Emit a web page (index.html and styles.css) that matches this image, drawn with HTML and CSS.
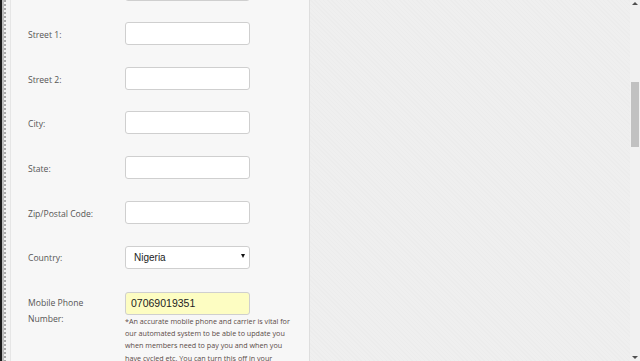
FILE: index.html
```html
<!DOCTYPE html>
<html>
<head>
    <link rel="stylesheet" href="styles.css">
</head>
<body>
    <div class="page">
        <div class="edge"></div>
        <div class="dots"></div>

        <div class="panel">
            <form class="form">
                <div class="row">
                    <label class="input-label">Address:</label>
                    <input class="input-field" type="text">
                </div>
                <div class="row">
                    <label class="input-label">Street 1:</label>
                    <input class="input-field" type="text">
                </div>
                <div class="row">
                    <label class="input-label">Street 2:</label>
                    <input class="input-field" type="text">
                </div>
                <div class="row">
                    <label class="input-label">City:</label>
                    <input class="input-field" type="text">
                </div>
                <div class="row">
                    <label class="input-label">State:</label>
                    <input class="input-field" type="text">
                </div>
                <div class="row">
                    <label class="input-label">Zip/Postal Code:</label>
                    <input class="input-field" type="text">
                </div>
                <div class="row">
                    <label class="input-label">Country:</label>
                    <div class="select-wrap">
                        <select class="input-field select-field">
                            <option>Nigeria</option>
                        </select>
                    </div>
                </div>
                <div class="row row-top">
                    <label class="input-label label-wrap">Mobile Phone Number:</label>
                    <div class="field-col">
                        <input class="input-field phone-field" type="text" value="07069019351">
                        <p class="help">*An accurate mobile phone and carrier is vital for our automated system to be able to update you when members need to pay you and when you have cycled etc. You can turn this off in your settings.</p>
                    </div>
                </div>
            </form>
        </div>

        <div class="backdrop"></div>

        <div class="scrollbar">
            <div class="arrow arrow-up"></div>
            <div class="thumb"></div>
            <div class="arrow arrow-down"></div>
        </div>
    </div>
</body>
</html>
```

FILE: styles.css
```css
body {
    margin: 0;
    font-family: "Open Sans", Arial, sans-serif;
    overflow: hidden;
}

.page {
    display: flex;
    width: 640px;
    height: 361px;
    overflow: hidden;
    background-color: #f4f4f4;
}

.edge {
    width: 2px;
    background-color: #1b1b1b;
    border-right: 2px solid #bdbdbd;
}

.dots {
    width: 6px;
    background-color: #f2f2f2;
    background-image: repeating-linear-gradient(to bottom, #a8a8a8 0 2px, transparent 2px 4px);
    background-size: 2px 4px;
    background-repeat: repeat-y;
}

.panel {
    width: 281px;
    padding-left: 17px;
    background-color: #f7f7f7;
    border-left: 1px solid #e6e6e6;
    border-right: 1px solid #dedede;
}

.form {
    margin-top: -22.5px;
}

.row {
    display: flex;
    align-items: center;
    height: 23px;
    margin-bottom: 21.67px;
}

.row-top {
    align-items: flex-start;
    height: auto;
}

.input-label {
    width: 97px;
    flex-shrink: 0;
    padding-top: 3px;
    font-size: 8.6px;
    color: #555;
}

.label-wrap {
    width: 80px;
    margin-right: 17px;
    padding-top: 5px;
    line-height: 16px;
}

.input-field {
    box-sizing: border-box;
    width: 125px;
    height: 23px;
    margin: 0;
    padding: 0 6px;
    background-color: #fff;
    border: 1px solid #cfcfcf;
    border-radius: 3px;
    font-family: Arial, "Liberation Sans", sans-serif;
    font-size: 10px;
    color: #222;
}

.select-wrap {
    position: relative;
}

.select-field {
    appearance: none;
    -webkit-appearance: none;
    padding-left: 8px;
}

.select-wrap::after {
    content: "";
    position: absolute;
    right: 5px;
    top: 10px;
    border-left: 2.5px solid transparent;
    border-right: 2.5px solid transparent;
    border-top: 4px solid #111;
}

.phone-field {
    background-color: #fdfdc2;
    font-size: 10.5px;
    padding-left: 5px;
}

.field-col {
    width: 168px;
}

.help {
    margin: 0;
    font-size: 7.2px;
    line-height: 12.4px;
    color: #5a4b47;
}

.backdrop {
    flex: 1;
    background-color: #eeeeee;
    background-image: repeating-linear-gradient(45deg, #ececec 0 1px, #efefef 1px 3px);
}

.scrollbar {
    position: relative;
    width: 10px;
    background-color: #f1f1f1;
}

.thumb {
    position: absolute;
    left: 1px;
    top: 82px;
    width: 8px;
    height: 65px;
    background-color: #c1c1c1;
}

.arrow {
    position: absolute;
    left: 2px;
    width: 0;
    height: 0;
    border-left: 3px solid transparent;
    border-right: 3px solid transparent;
}

.arrow-up {
    top: 2px;
    border-bottom: 3px solid #505050;
}

.arrow-down {
    bottom: 2px;
    border-top: 3px solid #505050;
}
```
